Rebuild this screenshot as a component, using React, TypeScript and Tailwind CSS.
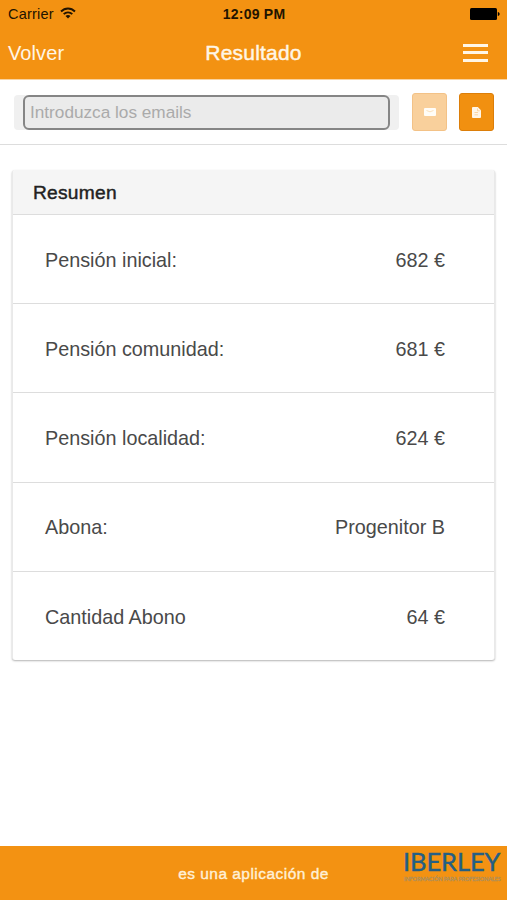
const rows = [
  { label: 'Pensión inicial:', value: '682 €' },
  { label: 'Pensión comunidad:', value: '681 €' },
  { label: 'Pensión localidad:', value: '624 €' },
  { label: 'Abona:', value: 'Progenitor B' },
  { label: 'Cantidad Abono', value: '64 €' },
];

function WifiIcon() {
  return (
    <svg className="w-4 h-3 -mt-0.5 text-[#221400]" viewBox="0 0 16 12" fill="none" stroke="currentColor" strokeWidth="1.9">
      <path d="M1 4.5C5 .4 11 .4 15 4.5" />
      <path d="M3.7 7.2c2.4-2.4 6.2-2.4 8.6 0" />
      <path d="M8 11.4 5.5 8.9c1.4-1.3 3.6-1.3 5 0z" fill="currentColor" stroke="none" />
    </svg>
  );
}

function BatteryIcon() {
  return (
    <svg className="w-[30px] h-3" viewBox="0 0 30 12" fill="#000">
      <rect x="0" y="0" width="27" height="12" rx="1.5" />
      <path d="M27.8 4c2.4.3 2.4 3.7 0 4z" />
    </svg>
  );
}

function MailIcon() {
  return (
    <svg className="w-3 h-2" viewBox="0 0 12 8">
      <rect width="12" height="8" rx="1" fill="#fffdf8" />
      <path d="M2.5 2.5 6 3.8l3.5-1.3" fill="none" stroke="#f9d9ae" strokeWidth="0.8" />
    </svg>
  );
}

function DocumentIcon() {
  return (
    <svg className="w-[9px] h-[11px]" viewBox="0 0 9 11">
      <path d="M1 0h4.8L9 3.2V10a1 1 0 0 1-1 1H1a1 1 0 0 1-1-1V1a1 1 0 0 1 1-1z" fill="#fff6e8" />
      <path d="M5.5 1.5v2.3h2.2M2.5 5.5h3.5M2.5 7.8h3.5" fill="none" stroke="#f8c684" strokeWidth="0.7" />
    </svg>
  );
}

function Header() {
  return (
    <header className="h-20 bg-[#f39212] border-b border-[#f9d3a0]">
      <div className="grid grid-cols-3 items-center h-[27px] pl-2 pr-[7px] text-[#221400]">
        <div className="flex items-center gap-1.5 text-[14.5px] leading-none">
          <span className="pt-px tracking-[0.2px]">Carrier</span>
          <WifiIcon />
        </div>
        <div className="text-center text-[14px] leading-none font-bold pt-px tracking-[0.25px]">12:09 PM</div>
        <div className="flex justify-end">
          <BatteryIcon />
        </div>
      </div>
      <div className="grid grid-cols-3 items-center h-[51px] pl-2 pr-[19px] text-[#fff6e6]">
        <a className="text-[20px] tracking-[0.1px]">Volver</a>
        <h1 className="text-center text-[21px] font-normal pl-[11px] tracking-[0.2px] [-webkit-text-stroke:0.45px]">Resultado</h1>
        <button className="flex flex-col gap-[4.5px] justify-self-end w-[25px]">
          <span className="h-[3px] w-full bg-[#fff6e6]" />
          <span className="h-[3px] w-full bg-[#fff6e6]" />
          <span className="h-[3px] w-full bg-[#fff6e6]" />
        </button>
      </div>
    </header>
  );
}

function EmailBar() {
  return (
    <div className="flex items-center h-[65px] pl-3.5 pr-[13px] border-b border-[#dddddd]">
      <div className="w-[385px] h-[35px] px-[9px] rounded bg-[#f0f0f0]">
        <input
          className="block w-full h-full px-[5px] rounded-[6px] border-2 border-[#858585] bg-[#ebebeb] text-[17.2px] placeholder:text-[#aaaaaa] outline-none"
          placeholder="Introduzca los emails"
        />
      </div>
      <button className="flex items-center justify-center w-[35px] h-[38px] ml-[13px] rounded-[3px] bg-[#f9d09c] border border-[#f3c287]">
        <MailIcon />
      </button>
      <button className="flex items-center justify-center w-[35px] h-[38px] ml-3 rounded-[3px] bg-[#f19010] border border-[#dc7e09]">
        <DocumentIcon />
      </button>
    </div>
  );
}

function Summary() {
  return (
    <section className="mx-3 mt-[25px] h-[490px] flex flex-col rounded-[3px] bg-white border-x border-[#e9e9e9] shadow-[0_1px_2px_rgba(0,0,0,0.3)] overflow-hidden">
      <h2 className="h-[45px] shrink-0 flex items-center pt-0.5 pl-5 bg-[#f5f5f5] border-b border-[#dddddd] text-[19.2px] tracking-[0.25px] text-[#222222] [-webkit-text-stroke:0.45px]">
        Resumen
      </h2>
      {rows.map((row) => (
        <div
          key={row.label}
          className="flex-1 flex items-center justify-between pt-[3px] pl-8 pr-[49px] border-b border-[#dddddd] last:border-b-0 text-[19.8px] text-[#494949]"
        >
          <span>{row.label}</span>
          <span>{row.value}</span>
        </div>
      ))}
    </section>
  );
}

function Footer() {
  return (
    <footer className="grid grid-cols-[1fr_auto_1fr] h-[54px] mt-auto bg-[#f39212]">
      <span className="col-start-2 self-center pt-0.5 text-[15.5px] tracking-[0.47px] text-[#fff0d6] [-webkit-text-stroke:0.4px]">
        es una aplicación de
      </span>
      <div className="justify-self-end w-[98px] mr-1.5 pt-px">
        <div className="h-[27px] text-[25.5px] leading-[29px] tracking-[-0.1px] text-[#245f85] font-['Lato'] [-webkit-text-stroke:0.4px] whitespace-nowrap">
          IBERLEY
        </div>
        <div className="pt-0.5 pl-px text-[5.5px] leading-[6px] tracking-[-0.08px] text-[#b08f58] font-['Lato'] [-webkit-text-stroke:0.3px] whitespace-nowrap">
          INFORMACIÓN PARA PROFESIONALES
        </div>
      </div>
    </footer>
  );
}

export default function App() {
  return (
    <div className="flex flex-col w-full h-[900px] bg-white overflow-hidden font-['Liberation_Sans',sans-serif]">
      <Header />
      <EmailBar />
      <Summary />
      <Footer />
    </div>
  );
}
